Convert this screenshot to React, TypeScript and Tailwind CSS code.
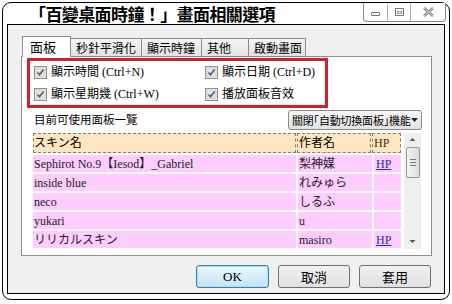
import React from 'react';

const serif = { fontFamily: '"Liberation Serif", "Noto Sans CJK TC", serif' };
const cjk = { fontFamily: '"Noto Sans CJK TC", "Noto Sans CJK JP", sans-serif' };
const jp = { fontFamily: '"Liberation Serif", "Noto Sans CJK JP", serif' };

type Skin = { name: string; author: string; hp: boolean };

const skins: Skin[] = [
  { name: 'Sephirot No.9【Iesod】_Gabriel', author: '梨神媒', hp: true },
  { name: 'inside blue', author: 'れみゅら', hp: false },
  { name: 'neco', author: 'しるふ', hp: false },
  { name: 'yukari', author: 'u', hp: false },
  { name: 'リリカルスキン', author: 'masiro', hp: true },
];

const tabs = [
  { label: '秒針平滑化', w: 'w-[71px]' },
  { label: '顯示時鐘', w: 'w-[60px]' },
  { label: '其他', w: 'w-[47px]' },
  { label: '啟動畫面', w: 'w-[57px]' },
];

function Check() {
  return (
    <svg width="13" height="13" viewBox="0 0 13 13" className="shrink-0">
      <rect x="0.5" y="0.5" width="12" height="12" fill="#f4f4f4" stroke="#8e8f8f" />
      <rect x="2" y="2" width="9" height="9" fill="#e4e4e4" stroke="#c9c9c9" strokeWidth="0.8" />
      <path d="M3.5 6.5 L5.5 8.8 L9.6 3.6" fill="none" stroke="#4a5f7e" strokeWidth="1.6" />
    </svg>
  );
}

function CheckItem({ label }: { label: string }) {
  return (
    <div className="flex items-center gap-[4px] h-[18px]">
      <Check />
      <span className="text-[12px] text-black leading-none" style={serif}>
        {label}
      </span>
    </div>
  );
}

export default function App() {
  return (
    <div className="w-[452px] h-[304px] bg-white p-[2px] pb-[4px]">
      <div className="h-full border border-black rounded-[9px] bg-white flex flex-col px-[4px] pb-[5px]">
        {/* 標題列 */}
        <div className="h-[21px] flex items-start justify-between shrink-0">
          <div
            className="pl-[22px] pt-[1px] text-[17px] font-bold leading-[20px] text-black tracking-[-0.6px]"
            style={cjk}
          >
            「百變桌面時鐘！」畫面相關選項
          </div>
          <div className="flex h-[19px] border border-t-0 border-[#8a8a8a] rounded-b-[4px] mr-[-1px] bg-white">
            <div className="w-[24px] flex items-center justify-center border-r border-[#b0b0b0]">
              <div className="w-[9px] h-[4px] border border-[#7a7a7a] rounded-[1px] mt-[4px]" />
            </div>
            <div className="w-[23px] flex items-center justify-center border-r border-[#b0b0b0]">
              <div className="w-[9px] h-[8px] border border-[#7a7a7a] flex items-center justify-center">
                <div className="w-[5px] h-[3px] border border-[#9a9a9a]" />
              </div>
            </div>
            <div className="w-[34px] flex items-center justify-center">
              <svg width="11" height="10" viewBox="0 0 11 10">
                <path d="M1 1 L10 9 M10 1 L1 9" stroke="#7a7a7a" strokeWidth="2.4" fill="none" />
                <path d="M1 1 L10 9 M10 1 L1 9" stroke="#f2f2f2" strokeWidth="0.8" fill="none" />
              </svg>
            </div>
          </div>
        </div>

        {/* 內容區 */}
        <div className="flex-1 border border-black bg-[#f0f0f0] flex flex-col pl-[13px] pr-[12px] pt-[10px]">
          {/* 分頁 */}
          <div className="flex items-end h-[21px] pl-[1px]">
            <div
              className="h-[21px] w-[49px] bg-white border border-b-0 border-[#8c8c8c] text-[13px] pl-[7px] leading-[19px] relative z-10 mb-[-1px]"
              style={cjk}
            >
              面板
            </div>
            {tabs.map((t) => (
              <div
                key={t.label}
                className={`${t.w} h-[18px] border border-b-0 border-l-0 border-[#8c8c8c] text-[12px] pl-[5px] leading-[17px] bg-gradient-to-b from-[#f5f5f5] to-[#e3e3e3]`}
                style={cjk}
              >
                {t.label}
              </div>
            ))}
          </div>

          {/* 面板 */}
          <div className="h-[200px] border border-[#8c8c8c] bg-white flex flex-col pl-[5px] pr-[9px] pt-[1px]">
            <div className="w-[301px] h-[50px] border-[3px] border-[#d0212b] grid grid-cols-[171px_1fr] content-start gap-y-[4px] pl-[4px] pt-[2px]">
              <CheckItem label="顯示時間 (Ctrl+N)" />
              <CheckItem label="顯示日期 (Ctrl+D)" />
              <CheckItem label="顯示星期幾 (Ctrl+W)" />
              <CheckItem label="播放面板音效" />
            </div>

            <div className="flex items-center justify-between mt-[2px] h-[20px] pl-[7px]">
              <span className="text-[11.5px] text-black" style={cjk}>
                目前可使用面板一覽
              </span>
              <div className="w-[134px] h-[20px] border border-[#8a8a8a] rounded-[3px] bg-gradient-to-b from-[#f6f6f6] to-[#e2e2e2] flex items-center justify-between pl-[3px] pr-[4px]">
                <span
                  className="text-[11px] leading-none text-black whitespace-nowrap tracking-[-0.2px] [font-feature-settings:'halt']"
                  style={cjk}
                >
                  關閉「自動切換面板」機能
                </span>
                <svg width="7" height="4" viewBox="0 0 7 4" className="shrink-0">
                  <path d="M0 0 L7 0 L3.5 4 Z" fill="#222" />
                </svg>
              </div>
            </div>

            {/* 面板列表 */}
            <div className="flex mt-[3px] pl-[6px] gap-[3px]">
              <div className="w-[368px] h-[116px] overflow-hidden flex flex-col gap-[2px]">
                <div className="grid grid-cols-[263px_74px_29px] gap-x-[1px] h-[20px] shrink-0 bg-[#fde5bf]">
                  <div className="border border-dashed border-[#8a7a66] text-[12px] leading-[18px]" style={jp}>
                    スキン名
                  </div>
                  <div className="border border-dashed border-[#8a7a66] text-[12px] leading-[18px] pl-[1px]" style={jp}>
                    作者名
                  </div>
                  <div className="border border-dashed border-[#8a7a66] text-[12px] leading-[18px] pl-[1px] text-[#333]" style={jp}>
                    HP
                  </div>
                </div>
                {skins.map((s) => (
                  <div key={s.name} className="grid grid-cols-[263px_74px_29px] gap-x-[2px] h-[17px] shrink-0">
                    <div className="bg-[#ffccff] text-[12px] leading-[16px] pt-[1px] pl-[1px] text-[#222] whitespace-nowrap" style={jp}>
                      {s.name}
                    </div>
                    <div className="bg-[#ffccff] text-[12px] leading-[16px] pt-[1px] pl-[1px] text-[#222]" style={jp}>
                      {s.author}
                    </div>
                    <div className="bg-[#ffccff] text-[12px] leading-[16px] pt-[1px] pl-[2px]" style={jp}>
                      {s.hp && <span className="text-[#2b2bb0] underline">HP</span>}
                    </div>
                  </div>
                ))}
              </div>
              {/* 捲軸 */}
              <div className="w-[17px] h-[116px] bg-[#f0eff0] flex flex-col items-center">
                <svg width="17" height="14" viewBox="0 0 17 14">
                  <path d="M5.5 8 L8.5 5 L11.5 8 Z" fill="#555" />
                </svg>
                <div className="w-[14px] h-[31px] border border-[#9a9a9a] rounded-[2px] bg-gradient-to-r from-[#f4f4f4] to-[#dcdcdc] flex flex-col items-center justify-center gap-[2px]">
                  <div className="w-[6px] h-px bg-[#777]" />
                  <div className="w-[6px] h-px bg-[#777]" />
                  <div className="w-[6px] h-px bg-[#777]" />
                </div>
                <div className="flex-1" />
                <svg width="17" height="14" viewBox="0 0 17 14">
                  <path d="M5.5 5 L8.5 8 L11.5 5 Z" fill="#555" />
                </svg>
              </div>
            </div>
          </div>

          {/* 按鈕 */}
          <div className="flex justify-end gap-[9px] mt-[9px] pr-[1px]">
            <button
              type="button"
              className="w-[73px] h-[23px] border border-[#3c7fb1] rounded-[3px] bg-gradient-to-b from-[#e8f5fc] to-[#c4e5f6] shadow-[inset_0_0_0_1px_#a6e0f7] text-[13px] text-black"
              style={serif}
            >
              OK
            </button>
            <button
              type="button"
              className="w-[72px] h-[23px] border border-[#707070] rounded-[3px] bg-gradient-to-b from-[#f2f2f2] to-[#e0e0e0] text-[13px] text-black"
              style={cjk}
            >
              取消
            </button>
            <button
              type="button"
              className="w-[72px] h-[23px] border border-[#707070] rounded-[3px] bg-gradient-to-b from-[#f2f2f2] to-[#e0e0e0] text-[13px] text-black"
              style={cjk}
            >
              套用
            </button>
          </div>
        </div>
      </div>
    </div>
  );
}
